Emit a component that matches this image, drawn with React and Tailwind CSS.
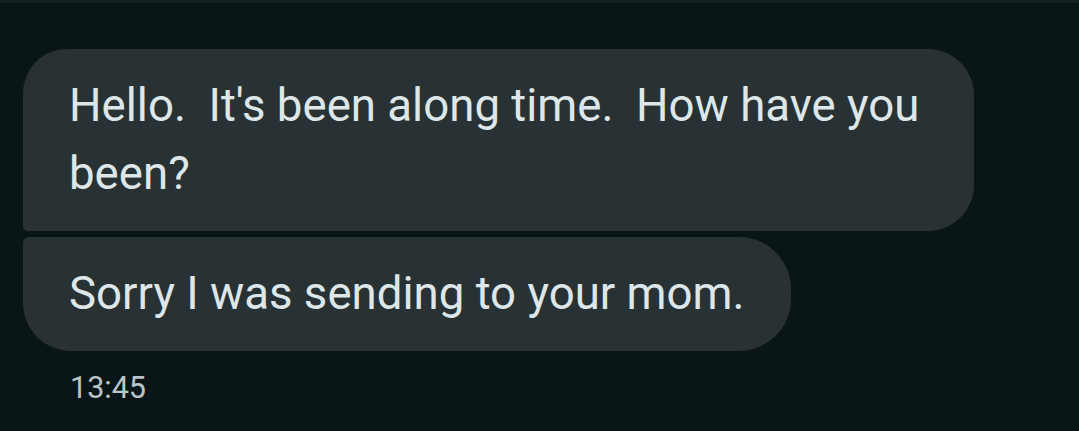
export default function App() {
  return (
    <div className="w-[1079px] h-[431px] bg-[#0a1517] overflow-hidden" style={{ fontFamily: 'Roboto, "Open Sans", sans-serif' }}>
      <div className="h-[3px] bg-[#162123]" />
      <div className="pl-[23px] pt-[46px] flex flex-col items-start gap-[6px]">
        <div className="max-w-[951px] bg-[#283234] text-[#dde7e9] text-[45.6px] leading-[68px] pl-[46px] pr-[46px] py-[23px] rounded-tl-[44px] rounded-tr-[46px] rounded-br-[46px] rounded-bl-[5px] whitespace-pre-wrap">
          {"Hello.  It's been along time.  How have you been?"}
        </div>
        <div className="bg-[#283234] text-[#dde7e9] text-[45.6px] leading-[68px] pl-[46px] pr-[46px] py-[23px] rounded-tl-[6px] rounded-tr-[52px] rounded-br-[52px] rounded-bl-[48px] whitespace-pre">
          Sorry I was sending to your mom.
        </div>
        <div className="pl-[47px] pt-[11px] text-[30.5px] leading-[40px] text-[#b9c5c7]">13:45</div>
      </div>
    </div>
  );
}
